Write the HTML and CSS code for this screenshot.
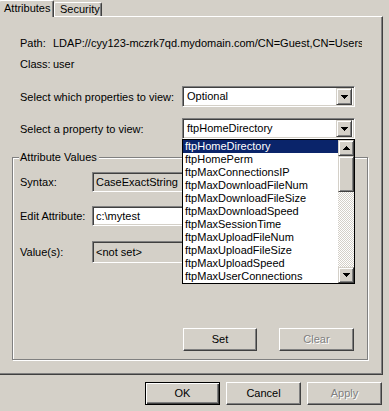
FILE: index.html
```html
<!DOCTYPE html>
<html>
<head>
<meta charset="utf-8">
<link rel="stylesheet" href="styles.css">
</head>
<body>
<div class="tabs">
  <div class="tab active">Attributes</div>
  <div class="tab second">Security</div>
</div>
<div class="panel">
  <div class="info first"><span class="ilbl">Path:</span><span class="ival">LDAP://cyy123-mczrk7qd.mydomain.com/CN=Guest,CN=Users,DC=mydomain,DC=com</span></div>
  <div class="info second-info"><span class="ilbl">Class:</span><span class="ival">user</span></div>
  <div class="selrow r1">
    <span class="slbl">Select which properties to view:</span>
    <div class="combo"><span class="ctext">Optional</span><span class="cbtn"><svg width="7" height="4" viewBox="0 0 7 4"><path d="M0 0h7v1h-1v1h-1v1h-1v1h-1v-1h-1v-1h-1v-1h-1z"/></svg></span></div>
  </div>
  <div class="selrow r2">
    <span class="slbl">Select a property to view:</span>
    <div class="combo"><span class="ctext">ftpHomeDirectory</span><span class="cbtn"><svg width="7" height="4" viewBox="0 0 7 4"><path d="M0 0h7v1h-1v1h-1v1h-1v1h-1v-1h-1v-1h-1v-1h-1z"/></svg></span></div>
  </div>
  <div class="group">
    <span class="legend">Attribute Values</span>
    <div class="frow f1"><span class="flbl">Syntax:</span><div class="field ro">CaseExactString</div></div>
    <div class="frow f2"><span class="flbl">Edit Attribute:</span><div class="field">c:\mytest</div></div>
    <div class="frow f3"><span class="flbl">Value(s):</span><div class="field ro tall">&lt;not set&gt;</div></div>
    <div class="gbtns">
      <div class="btn set">Set</div>
      <div class="btn clear disabled">Clear</div>
    </div>
  </div>
  <div class="dropdown">
    <div class="items">
      <div class="item sel">ftpHomeDirectory</div>
      <div class="item">ftpHomePerm</div>
      <div class="item">ftpMaxConnectionsIP</div>
      <div class="item">ftpMaxDownloadFileNum</div>
      <div class="item">ftpMaxDownloadFileSize</div>
      <div class="item">ftpMaxDownloadSpeed</div>
      <div class="item">ftpMaxSessionTime</div>
      <div class="item">ftpMaxUploadFileNum</div>
      <div class="item">ftpMaxUploadFileSize</div>
      <div class="item">ftpMaxUploadSpeed</div>
      <div class="item">ftpMaxUserConnections</div>
    </div>
    <div class="sbar">
      <div class="sbtn"><svg width="7" height="4" viewBox="0 0 7 4"><path d="M3 0h1v1h1v1h1v1h1v1h-7v-1h1v-1h1v-1h1z"/></svg></div>
      <div class="thumb"></div>
      <div class="track"></div>
      <div class="sbtn"><svg width="7" height="4" viewBox="0 0 7 4"><path d="M0 0h7v1h-1v1h-1v1h-1v1h-1v-1h-1v-1h-1v-1h-1z"/></svg></div>
    </div>
  </div>
</div>
<div class="dlgbtns">
  <div class="btn default">OK</div>
  <div class="btn">Cancel</div>
  <div class="btn disabled">Apply</div>
</div>
</body>
</html>
```
FILE: styles.css
```css
* { box-sizing: border-box; }
body {
  margin: 0;
  width: 389px;
  height: 411px;
  overflow: hidden;
  background: #d4d0c8;
  font-family: "Liberation Sans", Arial, sans-serif;
  font-size: 11px;
  color: #000;
}
.tabs {
  display: flex;
  align-items: flex-end;
  height: 16px;
}
.tab {
  height: 14px;
  line-height: 12px;
  border-top: 1px solid #fff;
  border-left: 1px solid #fff;
  border-right: 1px solid #404040;
  box-shadow: inset -1px 0 #808080;
  border-radius: 2px 2px 0 0;
}
.tab.active {
  width: 55px;
  height: 17px;
  margin-bottom: -1px;
  margin-left: -1px;
  padding-left: 4px;
  line-height: 14px;
  position: relative;
  z-index: 1;
  background: #d4d0c8;
}
.tab.second {
  width: 48px;
  padding-left: 5px;
}
.panel {
  position: relative;
  width: 384px;
  height: 359px;
  margin-left: -1px;
  padding: 20px 0 0 12px;
  border-top: 1px solid #fff;
  border-left: 1px solid #fff;
  border-right: 1px solid #404040;
  border-bottom: 1px solid #404040;
  box-shadow: inset -1px -1px #808080;
}
.info {
  display: flex;
  height: 13px;
  line-height: 13px;
  padding-left: 8px;
  white-space: nowrap;
}
.info.second-info { margin-top: 8px; }
.ilbl { width: 33px; flex: none; }
.ival { width: 309px; overflow: hidden; }
.selrow {
  display: flex;
  align-items: center;
  padding-left: 8px;
  height: 21px;
}
.selrow.r1 { margin-top: 15px; }
.selrow.r2 { margin-top: 11px; }
.slbl { width: 162px; flex: none; }
.combo {
  width: 173px;
  height: 21px;
  display: flex;
  align-items: center;
  justify-content: space-between;
  background: #fff;
  border: 1px solid;
  border-color: #808080 #fff #fff #808080;
  box-shadow: inset 1px 1px #404040, inset -1px -1px #d4d0c8;
  padding: 2px 2px 2px 4px;
}
.ctext { line-height: 13px; }
.cbtn, .sbtn {
  width: 16px;
  height: 17px;
  flex: none;
  display: flex;
  align-items: center;
  justify-content: center;
  background: #d4d0c8;
  border: 1px solid;
  border-color: #d4d0c8 #404040 #404040 #d4d0c8;
  box-shadow: inset 1px 1px #fff, inset -1px -1px #808080;
}
.cbtn svg, .sbtn svg { display: block; }
.group {
  position: relative;
  width: 356px;
  height: 203px;
  margin-top: 18px;
  padding: 14px 0 0 7px;
  border: 1px solid #808080;
  box-shadow: inset 1px 1px #fff, 1px 1px #fff;
}
.legend {
  position: absolute;
  left: 6px;
  top: -7px;
  padding: 0 2px 0 1px;
  line-height: 13px;
  background: #d4d0c8;
}
.frow {
  display: flex;
  align-items: center;
  height: 20px;
}
.frow.f2 { margin-top: 14px; }
.frow.f3 { margin-top: 15px; height: 22px; }
.flbl { width: 72px; flex: none; }
.field {
  width: 263px;
  height: 20px;
  line-height: 14px;
  padding: 2px 3px;
  background: #fff;
  border: 1px solid;
  border-color: #808080 #fff #fff #808080;
  box-shadow: inset 1px 1px #404040, inset -1px -1px #d4d0c8;
}
.field.ro { background: #d4d0c8; }
.field.tall { height: 22px; line-height: 16px; }
.gbtns {
  display: flex;
  justify-content: flex-end;
  gap: 22px;
  margin-top: 65px;
  padding-right: 13px;
}
.btn {
  width: 75px;
  height: 23px;
  line-height: 20px;
  text-align: center;
  border: 1px solid;
  border-color: #fff #404040 #404040 #fff;
  box-shadow: inset -1px -1px #808080;
}
.btn.set { width: 74px; }
.btn.default {
  border: 1px solid #000;
  box-shadow: inset 1px 1px #fff, inset -1px -1px #404040, inset -2px -2px #808080;
}
.btn.disabled {
  color: #808080;
  text-shadow: 1px 1px #fff;
}
.dlgbtns {
  display: flex;
  justify-content: flex-end;
  gap: 6px;
  margin-top: 7px;
  padding-right: 7px;
}
.dropdown {
  position: absolute;
  left: 182px;
  top: 122px;
  width: 173px;
  height: 145px;
  display: flex;
  background: #fff;
  border: 1px solid #000;
  z-index: 2;
}
.items { flex: 1; }
.item {
  height: 13px;
  line-height: 13px;
  padding-left: 2px;
  white-space: nowrap;
}
.item.sel { background: #0a246a; color: #fff; }
.sbar {
  width: 16px;
  display: flex;
  flex-direction: column;
}
.sbtn { height: 16px; }
.thumb {
  height: 36px;
  background: #d4d0c8;
  border: 1px solid;
  border-color: #d4d0c8 #404040 #404040 #d4d0c8;
  box-shadow: inset 1px 1px #fff, inset -1px -1px #808080;
}
.track {
  flex: 1;
  background: repeating-conic-gradient(#fff 0 25%, #d4d0c8 0 50%) 0 0 / 2px 2px;
}
```
